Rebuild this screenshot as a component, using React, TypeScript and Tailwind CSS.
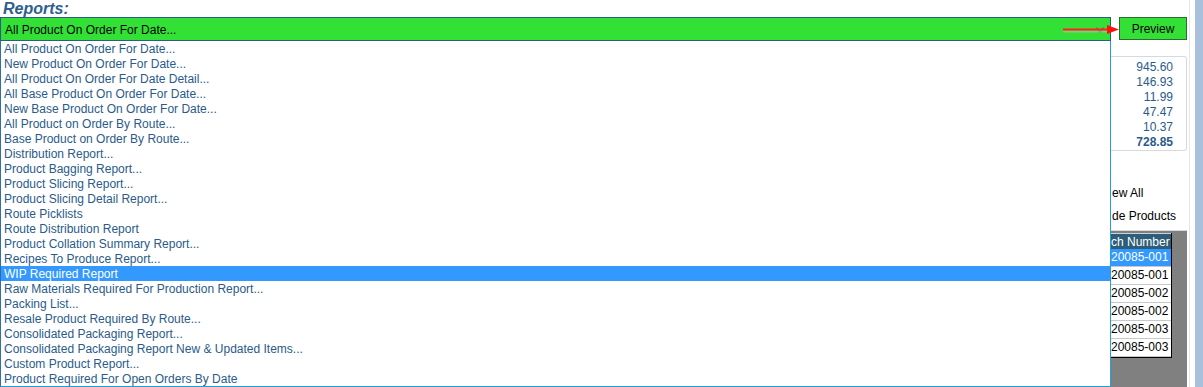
import React from "react";

const items = [
  "All Product On Order For Date...",
  "New Product On Order For Date...",
  "All Product On Order For Date Detail...",
  "All Base Product On Order For Date...",
  "New Base Product On Order For Date...",
  "All Product on Order By Route...",
  "Base Product on Order By Route...",
  "Distribution Report...",
  "Product Bagging Report...",
  "Product Slicing Report...",
  "Product Slicing Detail Report...",
  "Route Picklists",
  "Route Distribution Report",
  "Product Collation Summary Report...",
  "Recipes To Produce Report...",
  "WIP Required Report",
  "Raw Materials Required For Production Report...",
  "Packing List...",
  "Resale Product Required By Route...",
  "Consolidated Packaging Report...",
  "Consolidated Packaging Report New & Updated Items...",
  "Custom Product Report...",
  "Product Required For Open Orders By Date",
];

const totals = ["945.60", "146.93", "11.99", "47.47", "10.37"];
const batches = ["20085-001", "20085-001", "20085-002", "20085-002", "20085-003", "20085-003"];

export default function App() {
  return (
    <div className="relative w-[1203px] h-[387px] bg-white flex overflow-hidden font-['Liberation_Sans',Arial,sans-serif]">
      <div className="w-[1187px] flex flex-col">
        <div className="h-[17px] pl-[3px] pt-[1px] text-[16px] leading-[16px] font-bold italic text-[#2d5f8f]">Reports:</div>
        <div className="flex h-[24px] gap-[8px] items-start">
          <div className="w-[1111px] h-[24px] bg-[#33e036] border border-[#2a5b8c] flex items-center pl-[4px] pr-[6px] pt-[1px] text-[12px] text-black">
            <span className="flex-1">All Product On Order For Date...</span>
            <svg width="8" height="6" viewBox="0 0 8 6">
              <path d="M0.5 0.5 L4 5 L7.5 0.5" fill="none" stroke="#4a6a50" strokeWidth="1.2" />
            </svg>
          </div>
          <div className="w-[68px] h-[23px] bg-[#33e036] border border-[#2e6b2e] flex items-center justify-center pt-[1px] text-[12px] text-black">
            Preview
          </div>
        </div>
        <div className="flex flex-1">
          <div className="w-[1111px] h-[346px] bg-white border-l border-l-[#2f6fa8] border-r border-r-[#1fa0d6] border-b border-b-[#1fa0d6] text-[12px] leading-[15px] text-[#2a5b8a]">
            {items.map((t, i) => (
              <div
                key={i}
                className={
                  i === 15
                    ? "h-[15px] pl-[3px] pt-[1px] bg-[#3399ff] text-white whitespace-nowrap"
                    : "h-[15px] pl-[3px] pt-[1px] whitespace-nowrap"
                }
              >
                <span className="leading-[14px] block">{t}</span>
              </div>
            ))}
          </div>
          <div className="w-[76px] flex flex-col">
            <div className="mt-[15px] h-[95px] border-t border-r border-b border-[#d3dae2] rounded-r-[3px] pt-[3px] pr-[13px] text-right text-[12px] leading-[15px] text-[#2a5b8a]">
              {totals.map((v, i) => (
                <div key={i}>{v}</div>
              ))}
              <div className="font-bold">728.85</div>
            </div>
            <div className="mt-[35px] h-[15px] pl-[1px] text-[12px] leading-[15px] text-black whitespace-nowrap">ew All</div>
            <div className="mt-[8px] h-[15px] pl-[1px] text-[12px] leading-[15px] text-black whitespace-nowrap">de Products</div>
            <div className="mt-[6px] flex-1 bg-[#808080] border-t border-[#d8d8d8] pt-[2px] pr-[15px]">
              <div className="border-r border-b border-black text-[12px] text-right whitespace-nowrap">
                <div className="h-[16px] leading-[16px] bg-[#2e5d78] text-white pr-[3px] border-t border-[#c8d4dc]">ch Number</div>
                {batches.map((b, i) => (
                  <div
                    key={i}
                    className={
                      i === 0
                        ? "h-[18px] leading-[17px] bg-[#3399ff] text-white pr-[3px] border-b border-[#c8c8c8]"
                        : "h-[18px] leading-[17px] bg-white text-black pr-[3px] border-b border-[#c8c8c8]"
                    }
                  >
                    {b}
                  </div>
                ))}
              </div>
            </div>
          </div>
        </div>
      </div>
      <div className="w-[8px] flex">
        <div className="w-[2px]" />
        <div className="w-[1px] bg-[#e6e6e6]" />
      </div>
      <div className="w-[8px] bg-[#a8c0dc]" />
      <svg className="absolute left-[1060px] top-[23px]" width="62" height="14" viewBox="0 0 62 14">
        <line x1="3" y1="8.5" x2="50" y2="8.5" stroke="#c8b8a0" strokeOpacity="0.6" strokeWidth="2" />
        <line x1="3" y1="6.5" x2="48" y2="6.5" stroke="#ff2020" strokeWidth="2" />
        <polygon points="47,2 59,6.5 47,11" fill="#ff1010" />
      </svg>
    </div>
  );
}
